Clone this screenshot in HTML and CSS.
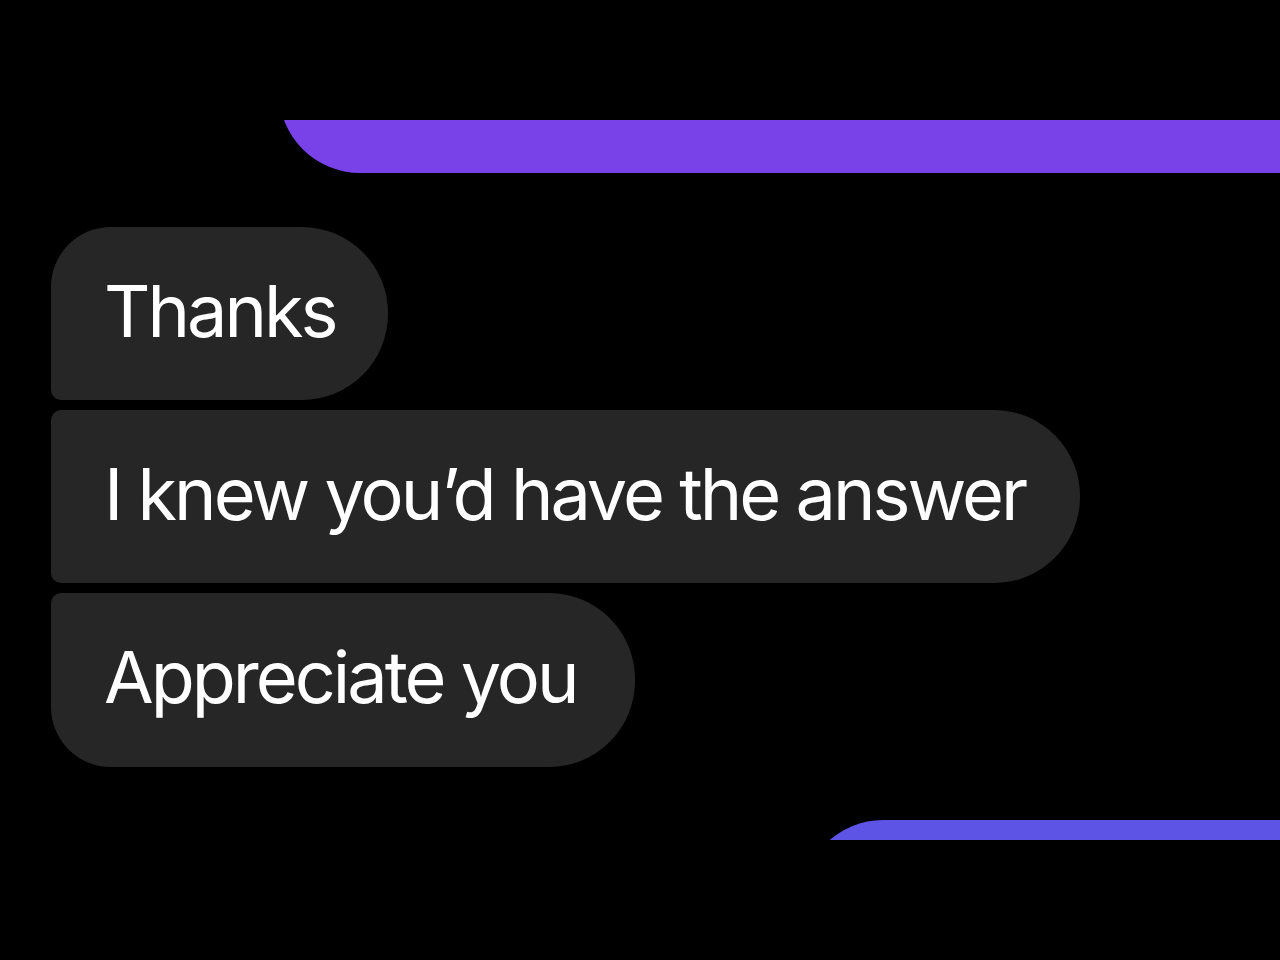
FILE: index.html
```html
<!DOCTYPE html>
<html lang="en">
<head>
    <meta charset="UTF-8">
    <meta name="viewport" content="width=device-width, initial-scale=1.0">
    <title>Messages</title>
    <link rel="stylesheet" href="styles.css">
</head>

<body>
    <div class="chat">
        <div class="clip clip-top">
            <div class="sent sent-top"></div>
        </div>

        <div class="group">
            <p class="bubble first">Thanks</p>
            <p class="bubble middle">I knew you’d have the answer</p>
            <p class="bubble last">Appreciate you</p>
        </div>

        <div class="clip clip-bottom">
            <div class="sent sent-bottom"></div>
        </div>
    </div>
</body>
</html>
```

FILE: styles.css
```css
* {
    box-sizing: border-box;
}
body {
    margin: 0;
    background: #000;
    font-family: Inter, "Noto Sans", sans-serif;
    color: #fff;
}
.chat {
    height: 960px;
    overflow: hidden;
    display: flex;
    flex-direction: column;
}
.clip {
    display: flex;
    justify-content: flex-end;
    overflow: hidden;
    flex-shrink: 0;
}
.clip-top {
    margin-top: 120px;
    height: 53px;
}
.clip-bottom {
    margin-top: 53px;
    height: 20px;
}
.sent {
    flex-shrink: 0;
    height: 162px;
}
.sent-top {
    width: 1001px;
    margin-top: -109px;
    border-radius: 81px 0 0 81px;
    background: #7942e8;
}
.sent-bottom {
    width: 478px;
    border-radius: 86px 0 0 86px;
    background: #5d53e4;
}
.group {
    display: flex;
    flex-direction: column;
    align-items: flex-start;
    gap: 10px;
    margin: 54px 0 0 51px;
}
.bubble {
    margin: 0;
    height: 173px;
    padding: 0 55px 0 53px;
    line-height: 168px;
    font-size: 72px;
    letter-spacing: -3px;
    white-space: nowrap;
    background: #262626;
    border-radius: 10px 86px 86px 10px;
}
.bubble.first {
    border-top-left-radius: 60px;
    padding-right: 52px;
}
.bubble.last {
    height: 174px;
    border-bottom-left-radius: 60px;
    padding-right: 58px;
}
```
